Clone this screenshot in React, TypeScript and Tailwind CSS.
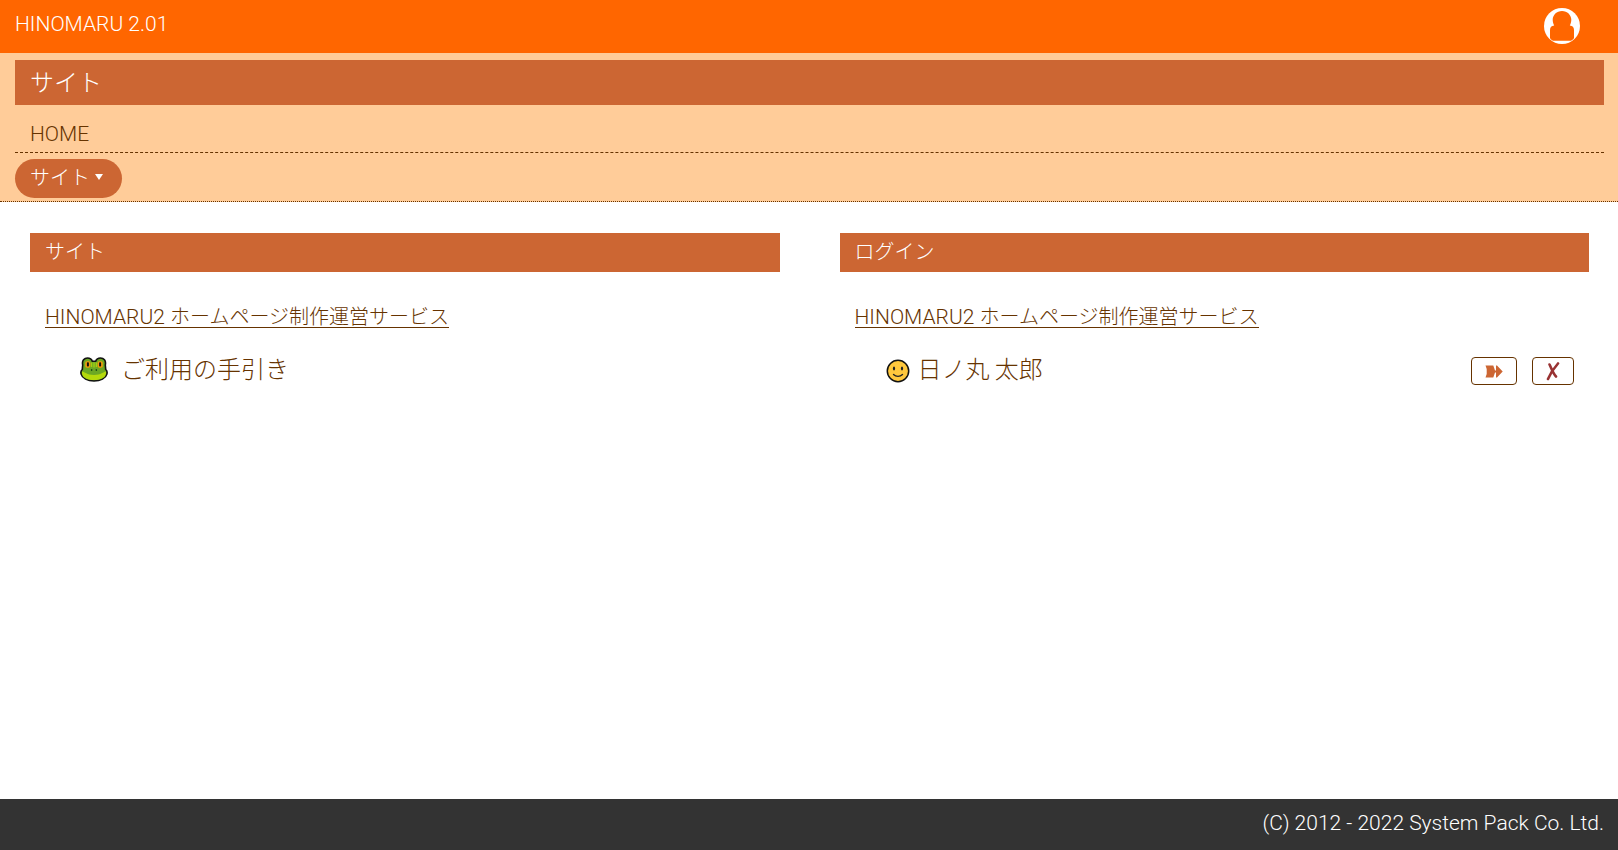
const Frog = () => (
  <svg viewBox="0 0 28 25" className="h-[25px] w-7" aria-hidden="true">
    <path d="M2.700 8C1.700 3.600 4.300 1 7.500 1c2.600 0 4.200 1.400 4.800 3.200h3.400C16.300 2.400 17.900 1 20.500 1c3.200 0 5.800 2.600 4.800 7 .2 1.800.3 3.200.4 4.500 1.500 1.200 1.600 3 1.200 4.500C25.700 21.300 20.500 24 14 24S2.300 21.300 1.100 17C.700 15.500.8 13.700 2.300 12.500c.1-1.300.2-2.700.4-4.500Z" fill="#6ca824" stroke="#111" strokeWidth="1.600" />
    <path d="M2 14.500c3 .2 4.500 3.500 12 3.500s9-3.300 12-3.500c1 5.500-5 8.600-12 8.600S1 20 2 14.500Z" fill="#b4d90c" />
    <path d="M11.700 5.500v4.500M14 5.500v5M16.300 5.500v4.500" stroke="#b4d90c" strokeWidth="1" />
    <rect x="5.200" y="4.200" width="5.200" height="6.500" rx="1.800" fill="#f29a0c" />
    <rect x="17.600" y="4.200" width="5.200" height="6.500" rx="1.800" fill="#f29a0c" />
    <rect x="6.900" y="5.200" width="2" height="4.300" rx=".8" fill="#111" />
    <rect x="19.100" y="5.200" width="2" height="4.300" rx=".8" fill="#111" />
    <rect x="10.900" y="12" width="1.500" height="2" rx=".7" fill="#184a10" />
    <rect x="15.600" y="12" width="1.500" height="2" rx=".7" fill="#184a10" />
  </svg>
);

const Smile = () => (
  <svg viewBox="0 0 24 24" className="size-6" aria-hidden="true">
    <circle cx="12" cy="12" r="10.700" fill="#ffc83d" stroke="#111" strokeWidth="1.500" />
    <ellipse cx="8" cy="9.500" rx="1.100" ry="2" fill="#222" />
    <ellipse cx="16" cy="9.500" rx="1.100" ry="2" fill="#222" />
    <path d="M7.500 15.500c2.500 2.500 6.500 2.500 9 0" fill="none" stroke="#222" strokeWidth="1.400" strokeLinecap="round" />
  </svg>
);

const User = () => (
  <svg viewBox="0 0 36 36" className="size-9" aria-hidden="true">
    <circle cx="18" cy="18" r="18" fill="#fff" />
    <path d="M18 3c5.300 0 9.300 4 9.300 8.800 0 2.200-.6 4-1.500 5.700 2.800.3 4.200 1.700 4.200 4.500v8.200c-1 1.200-1.800 1.800-3 2.600H9c-1.200-.8-2-1.400-3-2.600V22c0-2.800 1.400-4.200 4.200-4.500-.9-1.700-1.500-3.500-1.500-5.700C8.700 7 12.700 3 18 3Z" fill="#f60" />
  </svg>
);

const latin = "font-['Roboto',sans-serif] text-[21px]";

function PanelTitle({ children }: { children: string }) {
  return <h2 className="flex h-[39px] items-center bg-[#c63] px-[15px] pb-1 text-white">{children}</h2>;
}

function ServiceLink() {
  return (
    <a href="#service" className="mt-[34px] ml-[15px] block w-fit border-b border-[#630] leading-5">
      <span className={latin}>HINOMARU2 </span>ホームページ制作運営サービス
    </a>
  );
}

export default function App() {
  return (
    <div className="flex min-h-screen flex-col bg-white font-['Noto_Sans_CJK_JP',sans-serif] text-[20px] leading-6 font-light text-[#630]">
      <header className="flex h-[53px] items-center justify-between bg-[#f60] pr-[38px] pb-0.5 pl-[15px] text-white">
        <a href="#top" className={`pb-1 ${latin}`}>HINOMARU 2.01</a>
        <button type="button" aria-label="ユーザー"><User /></button>
      </header>
      <nav className="border-b border-dotted border-[#630] bg-[#fc9] pt-[7px] pb-[3px]">
        <div className="mr-3.5 ml-[15px]">
          <h1 className="flex h-[45px] items-center bg-[#c63] px-[15px] pb-1 text-2xl text-white">サイト</h1>
          <div className="flex h-12 items-end border-b border-dashed border-[#630] px-[15px] pb-1.5">
            <a href="#home" className={latin}>HOME</a>
          </div>
          <button type="button" className="mt-1.5 flex h-[39px] items-center gap-1 rounded-full bg-[#c63] pr-[18px] pb-1 pl-[15px] text-white">
            サイト
            <svg viewBox="0 0 10 8" className="h-2 w-2.5" aria-hidden="true"><path d="M1 1h8L5 7Z" fill="currentColor" /></svg>
          </button>
        </div>
      </nav>
      <main className="grid flex-1 grid-cols-2 content-start gap-x-[60px] pt-[31px] pr-[29px] pl-[30px]">
        <section>
          <PanelTitle>サイト</PanelTitle>
          <ServiceLink />
          <a href="#guide" className="mt-[27px] flex h-7 items-center gap-[13px] pl-[50px] text-2xl leading-7">
            <Frog />
            <span className="pb-0.5">ご利用の手引き</span>
          </a>
        </section>
        <section>
          <PanelTitle>ログイン</PanelTitle>
          <ServiceLink />
          <div className="mt-[29px] flex h-7 items-center gap-[15px] pr-[15px] pl-[46px] text-2xl leading-7">
            <a href="#user" className="mr-auto flex items-center gap-2">
              <Smile />
              <span className="pb-1.5">日ノ丸 太郎</span>
            </a>
            <button type="button" aria-label="ログイン" className="flex h-7 w-[46px] items-center justify-center rounded border border-[#630]">
              <svg viewBox="0 0 18 13" className="h-[13px] w-[18px]" aria-hidden="true"><path d="M.5.500h7.800l1.700 5h1v-5h1l5.700 6-5.700 6h-1v-5h-1l-1.700 5H.5l1.200-3.500v-5Z" fill="#c63" /></svg>
            </button>
            <button type="button" aria-label="削除" className="flex h-7 w-[42px] items-center justify-center rounded border border-[#630]">
              <svg viewBox="0 0 14 19" className="h-[19px] w-3.5" aria-hidden="true"><path d="M3.500 2.500c1.500 3 3.500 9 6.500 12M12 1.500C8 6 4.500 11 2 17" fill="none" stroke="#933" strokeWidth="2.600" strokeLinecap="round" /></svg>
            </button>
          </div>
        </section>
      </main>
      <footer className="flex h-[51px] justify-end bg-[#333] pt-3 pr-3.5 pl-[15px] text-white">
        <p className={latin}>(C) 2012 - 2022 System Pack Co. Ltd.</p>
      </footer>
    </div>
  );
}
